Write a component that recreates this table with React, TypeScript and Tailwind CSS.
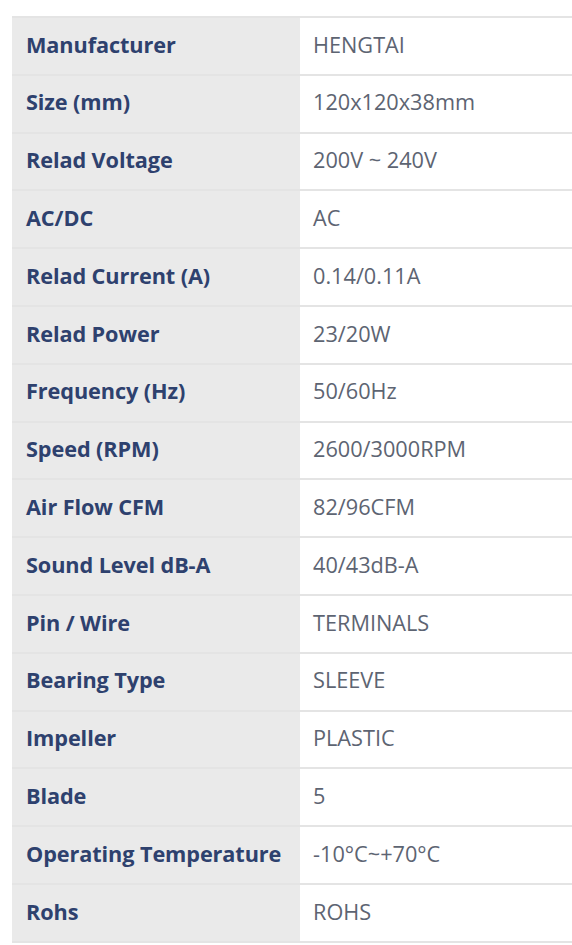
const rows: [string, string][] = [
  ["Manufacturer", "HENGTAI"],
  ["Size (mm)", "120x120x38mm"],
  ["Relad Voltage", "200V ~ 240V"],
  ["AC/DC", "AC"],
  ["Relad Current (A)", "0.14/0.11A"],
  ["Relad Power", "23/20W"],
  ["Frequency (Hz)", "50/60Hz"],
  ["Speed (RPM)", "2600/3000RPM"],
  ["Air Flow CFM", "82/96CFM"],
  ["Sound Level dB-A", "40/43dB-A"],
  ["Pin / Wire", "TERMINALS"],
  ["Bearing Type", "SLEEVE"],
  ["Impeller", "PLASTIC"],
  ["Blade", "5"],
  ["Operating Temperature", "-10°C~+70°C"],
  ["Rohs", "ROHS"],
];

export default function App() {
  return (
    <div className="min-h-[945px] w-[572px] overflow-hidden bg-white pl-3 pt-4 font-['Open_Sans',sans-serif]">
      <div className="w-[580px] border-t-2 border-[#e4e4e4]">
        {rows.map(([label, value]) => (
          <div key={label} className="flex h-[57.8px] border-b-2 border-[#e4e4e4]">
            <div className="flex w-[288px] items-center bg-[#eaeaea] pl-[14px] pb-[2px] text-[21.7px] font-bold tracking-[-0.1px] text-[#2e416e]">
              {label}
            </div>
            <div className="flex flex-1 items-center pl-[13px] pb-[2px] text-[21.7px] text-[#5d6472]">
              {value}
            </div>
          </div>
        ))}
      </div>
    </div>
  );
}
